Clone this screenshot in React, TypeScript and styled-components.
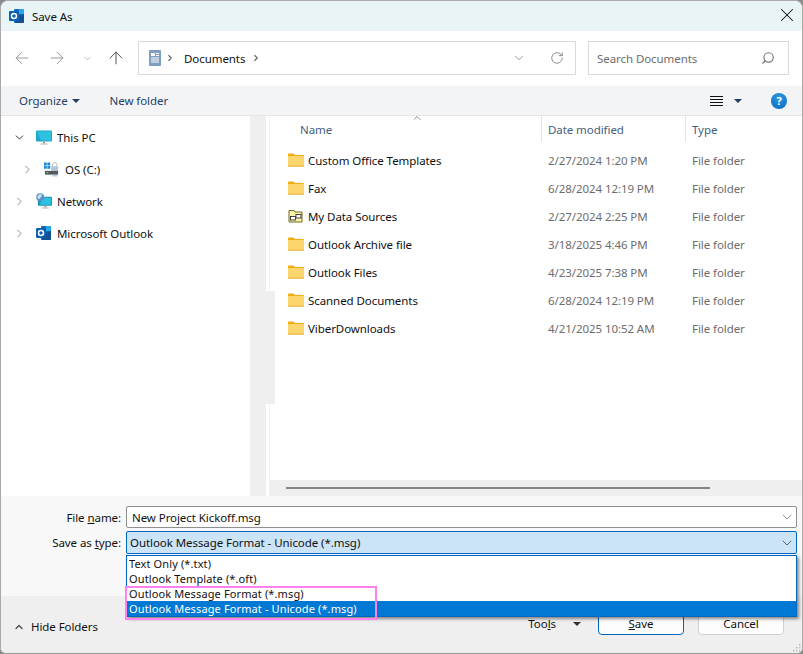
import React from "react";
import styled, { createGlobalStyle } from "styled-components";
import { ArrowLeft, ArrowRight, ArrowUp, ChevronDown, ChevronRight, ChevronUp, RotateCw, Search, X } from "lucide-react";

const GlobalStyle = createGlobalStyle`
  html, body {
    margin: 0;
    padding: 0;
    background: #8a8a8a;
  }
  body {
    font-family: "Noto Sans", "Open Sans", sans-serif;
    font-size: 11.5px;
    letter-spacing: -0.07px;
    color: #111;
  }
`;

const Window = styled.div`
  position: relative;
  width: 803px;
  height: 654px;
  box-sizing: border-box;
  border: 1px solid #a9a9a9;
  border-bottom-color: #9a9a9a;
  border-radius: 8px 8px 6px 6px;
  overflow: hidden;
  display: flex;
  flex-direction: column;
  background: #fff;
`;

const TitleBar = styled.div`
  height: 30px;
  flex: none;
  display: flex;
  align-items: center;
  padding: 0 4px 0 8px;
  gap: 7px;
  background: #e8f4f6;
`;

const TitleText = styled.span`
  flex: 1;
`;

const CloseIcon = styled(X)`
  margin-bottom: 2px;
  color: #111;
`;

const NavBar = styled.div`
  height: 55px;
  flex: none;
  display: flex;
  align-items: center;
  box-sizing: border-box;
  padding: 0 13px 1px 11px;
  background: #fff;
`;

const NavButton = styled.span<{ $width: number; $color: string }>`
  width: ${(p) => p.$width}px;
  flex: none;
  display: flex;
  align-items: center;
  color: ${(p) => p.$color};
`;

const AddressBox = styled.div`
  width: 438px;
  height: 34px;
  margin-left: 12px;
  margin-right: 12px;
  flex: none;
  box-sizing: border-box;
  border: 1px solid #d9d9d9;
  display: flex;
  align-items: center;
  padding: 0 11px 0 10px;
`;

const CrumbGap = styled.span`
  flex: 1;
`;

const CrumbArrow = styled(ChevronRight)<{ $left: number; $right: number }>`
  margin: 0 ${(p) => p.$right}px 0 ${(p) => p.$left}px;
  color: #666;
`;

const AddressDrop = styled(ChevronDown)`
  margin-right: 24px;
  color: #777;
`;

const SearchBox = styled.div`
  flex: 1;
  height: 34px;
  box-sizing: border-box;
  border: 1px solid #d9d9d9;
  display: flex;
  align-items: center;
  justify-content: space-between;
  padding: 0 13px 0 8px;
  color: #6d6d6d;
`;

const SearchGlass = styled(Search)`
  transform: scaleX(-1);
  color: #777;
`;

const ToolBar = styled.div`
  height: 30px;
  flex: none;
  display: flex;
  align-items: center;
  padding: 0 15px 0 18px;
  background: #f3f4f6;
  border-bottom: 1px solid #e6e6e6;
  box-sizing: border-box;
  color: #1f3f66;
`;

const Caret = styled.span<{ $color?: string }>`
  display: inline-block;
  width: 0;
  height: 0;
  border-left: 4px solid transparent;
  border-right: 4px solid transparent;
  border-top: 4px solid ${(p) => p.$color ?? "#1f3f66"};
`;

const OrganizeCaret = styled(Caret)`
  margin: 0 0 0 4px;
`;

const NewFolder = styled.span`
  margin-left: 30px;
  flex: 1;
`;

const ViewIcon = styled.span`
  width: 13px;
  height: 10px;
  margin-right: 11px;
  background: repeating-linear-gradient(to bottom, #111 0 1px, transparent 1px 3px);
`;

const HelpDot = styled.span`
  width: 16px;
  height: 16px;
  margin-left: 29px;
  border-radius: 50%;
  background: radial-gradient(circle at 50% 30%, #2b9be6, #0a66b8);
  color: #fff;
  font-size: 11px;
  font-weight: 700;
  line-height: 16px;
  text-align: center;
`;

const Main = styled.div`
  position: relative;
  height: 380px;
  flex: none;
  display: grid;
  grid-template-columns: 249px 16px 1fr;
`;

const TreePane = styled.div`
  padding-top: 5px;
  display: flex;
  flex-direction: column;
  background: #fff;
`;

const TreeRow = styled.div<{ $indent: number }>`
  height: 32px;
  flex: none;
  display: flex;
  align-items: center;
  padding-left: ${(p) => p.$indent}px;
`;

const TreeToggle = styled.span`
  width: 16px;
  flex: none;
  margin-right: 9px;
  display: flex;
  justify-content: center;
  color: #8a8a8a;
`;

const TreeLabel = styled.span`
  margin-left: 5px;
`;

const PaneTrack = styled.div`
  background: #efefef;
`;

const PaneThumb = styled.div`
  position: absolute;
  left: 265px;
  top: 175px;
  width: 9px;
  height: 113px;
  background: #efefef;
`;

const ListPane = styled.div`
  display: flex;
  flex-direction: column;
  min-width: 0;
  margin-left: 3px;
  border-left: 1px solid #f1f1f1;
`;

const ListHeader = styled.div`
  position: relative;
  height: 26px;
  flex: none;
  display: grid;
  grid-template-columns: 272px 144px 1fr;
  color: #46607e;
`;

const HeaderCell = styled.div<{ $pad: number; $last?: boolean }>`
  display: flex;
  align-items: center;
  padding-left: ${(p) => p.$pad}px;
  border-right: ${(p) => (p.$last ? "none" : "1px solid #e3e3e3")};
`;

const SortMark = styled.span`
  position: absolute;
  left: 141px;
  top: -4px;
  color: #666;
  display: flex;
`;

const Rows = styled.div`
  flex: 1;
  padding-top: 4px;
`;

const Row = styled.div`
  height: 28px;
  display: grid;
  grid-template-columns: 272px 144px 1fr;
  align-items: center;
`;

const NameCell = styled.div`
  display: flex;
  align-items: center;
  padding-left: 18px;
  gap: 4px;
`;

const MetaCell = styled.div`
  padding-left: 6px;
  color: #6d6d6d;
`;

const HScroll = styled.div`
  height: 16px;
  flex: none;
  display: flex;
  align-items: center;
  padding: 0 92px 0 16px;
  background: #efefef;
`;

const HThumb = styled.div`
  flex: 1;
  height: 2px;
  background: #858585;
`;

const FormArea = styled.div`
  height: 100px;
  flex: none;
  box-sizing: border-box;
  padding: 10px 5px 0 0;
  background: #f8f8f8;
  display: flex;
  flex-direction: column;
  gap: 3px;
`;

const FormRow = styled.div`
  display: flex;
  align-items: center;
`;

const FieldLabel = styled.label`
  width: 125px;
  flex: none;
  text-align: right;
  padding-right: 5px;
  box-sizing: border-box;
`;

const Field = styled.div<{ $active?: boolean }>`
  flex: 1;
  height: ${(p) => (p.$active ? 23 : 22)}px;
  box-sizing: border-box;
  display: flex;
  align-items: center;
  justify-content: space-between;
  padding: 0 1px 0 ${(p) => (p.$active ? 3 : 5)}px;
  border: 1px solid ${(p) => (p.$active ? "#0067c0" : "#8f8f8f")};
  border-radius: 2px;
  background: ${(p) => (p.$active ? "#cce4f7" : "#fff")};
  color: ${(p) => (p.$active ? "#555" : "#777")};
`;

const FieldText = styled.span`
  color: #111;
`;

const DropList = styled.div`
  position: absolute;
  left: 125px;
  top: 554px;
  width: 671px;
  height: 62px;
  box-sizing: border-box;
  border: 1px solid #0067c0;
  background: #fff;
  box-shadow: 2px 2px 3px rgba(0, 0, 0, 0.45);
  z-index: 2;
`;

const DropItem = styled.div<{ $selected?: boolean }>`
  height: 15px;
  line-height: 15px;
  padding-left: 2px;
  font-size: 11px;
  letter-spacing: 0.12px;
  color: ${(p) => (p.$selected ? "#fff" : "#111")};
  background: ${(p) => (p.$selected ? "#0078d4" : "transparent")};
`;

const Highlight = styled.div`
  position: absolute;
  left: 124px;
  top: 585px;
  width: 252px;
  height: 34px;
  box-sizing: border-box;
  border: 2px solid #ff80ee;
  z-index: 3;
`;

const Footer = styled.div`
  flex: 1;
  display: flex;
  align-items: flex-end;
  box-sizing: border-box;
  padding: 0 18px 18px 12px;
  background: #efefef;
`;

const HideFolders = styled.div`
  flex: 1;
  display: flex;
  align-items: center;
  gap: 6px;
  padding-bottom: 1px;
`;

const ToolsMenu = styled.div`
  display: flex;
  align-items: center;
  gap: 17px;
  margin-right: 17px;
  padding-bottom: 4px;
`;

const DialogButton = styled.button<{ $primary?: boolean }>`
  width: 86px;
  height: 23px;
  margin-left: ${(p) => (p.$primary ? 0 : 14)}px;
  border: 1px solid ${(p) => (p.$primary ? "#0067c0" : "#d0d0d0")};
  border-radius: 4px;
  background: #fdfdfd;
  color: #111;
  font-family: inherit;
  font-size: inherit;
  letter-spacing: inherit;
  padding: 0;
`;

const Grip = styled.svg`
  position: absolute;
  right: 1px;
  bottom: 1px;
`;

const OutlookIcon = ({ size = 16 }: { size?: number }) => (
  <svg width={size} height={size} viewBox="0 0 16 16">
    <rect x="5" y="1" width="10" height="14" rx="1" fill="#0f6cbd" />
    <rect x="10" y="1" width="5" height="5" fill="#28a8ea" />
    <path d="M7 9l8-3v8a1 1 0 0 1-1 1H6z" fill="#14447d" opacity="0.7" />
    <rect x="0" y="3" width="10" height="10" rx="1" fill="#0a5fb0" />
    <circle cx="5" cy="8" r="2.5" fill="none" stroke="#fff" strokeWidth="1.5" />
  </svg>
);

const FolderIcon = () => (
  <svg width="16" height="14" viewBox="0 0 16 14">
    <path d="M0 1.5a1 1 0 0 1 1-1h4.5l1.5 1.5h8a1 1 0 0 1 1 1V5H0z" fill="#f0ac12" />
    <rect x="0" y="3" width="16" height="10.5" rx="1" fill="#fcd56c" />
    <rect x="0" y="12.6" width="16" height="1" fill="#e8b23a" />
  </svg>
);

const SharedFolderIcon = () => (
  <svg width="16" height="14" viewBox="0 0 16 14">
    <path d="M1 13V1.5h5l1 1.5h7v10z" fill="#fdf3a8" stroke="#6e6a20" strokeWidth="1" />
    <rect x="2.5" y="7.5" width="5" height="3.5" fill="#fff" stroke="#333" strokeWidth="0.9" />
    <rect x="8" y="5.5" width="5" height="3.5" fill="#fff" stroke="#333" strokeWidth="0.9" />
  </svg>
);

const DocIcon = () => (
  <svg width="12" height="16" viewBox="0 0 12 16">
    <rect width="12" height="16" rx="1" fill="#7e9fc0" />
    <rect x="2" y="3" width="4" height="3" fill="#fff" />
    <path d="M7 3.5h3M7 5.5h3M2 8h8M2 10h8M2 12h8" stroke="#fff" strokeWidth="1" />
  </svg>
);

const MonitorIcon = () => (
  <svg width="16" height="15" viewBox="0 0 16 15">
    <rect x="0" y="0.5" width="16" height="11" rx="1" fill="#1fa5cf" />
    <path d="M1 1.5h14v9H5z" fill="#2fc2de" />
    <rect x="7" y="11.5" width="2" height="2" fill="#9a9a9a" />
    <rect x="4.5" y="13.5" width="7" height="1" fill="#b5b5b5" />
  </svg>
);

const DriveIcon = () => (
  <svg width="16" height="15" viewBox="0 0 17 15">
    <path d="M0 0h3v3H0zM3.6 0h3v3h-3zM0 3.6h3v3H0zM3.6 3.6h3v3h-3z" fill="#1a8ae0" />
    <rect x="7.5" y="4" width="7.5" height="5" fill="#b4c6d6" />
    <path d="M9 4V2.5a2.4 2.4 0 0 1 4.8 0V4" fill="none" stroke="#b8b8b8" strokeWidth="1" />
    <rect x="1" y="9" width="14" height="4" fill="#54585c" />
    <rect x="2.5" y="10.5" width="2" height="1" fill="#6fe06f" />
    <path d="M9 13h5v2H9z" fill="#b4c6d6" />
  </svg>
);

const NetworkIcon = () => (
  <svg width="16" height="16" viewBox="0 0 17 17">
    <rect x="2" y="4" width="15" height="9.5" rx="1" fill="#1795b8" />
    <path d="M7 5h9v7.5H4z" fill="#2fc2de" />
    <rect x="9" y="13.5" width="2" height="2" fill="#9a9a9a" />
    <rect x="6.5" y="15.5" width="7" height="1" fill="#b5b5b5" />
    <circle cx="4.5" cy="4.5" r="4.2" fill="#5b93c9" />
    <path d="M2 3c1.5-2 3-2 4-1.5S5 5 3.5 6 1 5 2 3z" fill="#cfe3f2" />
  </svg>
);

const files: [string, string, boolean?][] = [
  ["Custom Office Templates", "2/27/2024 1:20 PM"],
  ["Fax", "6/28/2024 12:19 PM"],
  ["My Data Sources", "2/27/2024 2:25 PM", true],
  ["Outlook Archive file", "3/18/2025 4:46 PM"],
  ["Outlook Files", "4/23/2025 7:38 PM"],
  ["Scanned Documents", "6/28/2024 12:19 PM"],
  ["ViberDownloads", "4/21/2025 10:52 AM"],
];

const App: React.FC = () => {
  return (
    <>
      <GlobalStyle />
      <Window>
        <TitleBar>
          <OutlookIcon />
          <TitleText>Save As</TitleText>
          <CloseIcon size={22} strokeWidth={1.1} />
        </TitleBar>

        <NavBar>
          <NavButton $width={35} $color="#9a9a9a"><ArrowLeft size={20} strokeWidth={1.2} /></NavButton>
          <NavButton $width={35} $color="#9a9a9a"><ArrowRight size={20} strokeWidth={1.2} /></NavButton>
          <NavButton $width={24} $color="#9a9a9a"><ChevronDown size={11} strokeWidth={1.4} /></NavButton>
          <NavButton $width={20} $color="#555"><ArrowUp size={20} strokeWidth={1.2} /></NavButton>
          <AddressBox>
            <DocIcon />
            <CrumbArrow size={10} strokeWidth={2.6} $left={4} $right={9} />
            <span>Documents</span>
            <CrumbArrow size={10} strokeWidth={2.6} $left={6} $right={0} />
            <CrumbGap />
            <AddressDrop size={14} strokeWidth={1.2} />
            <RotateCw size={14} strokeWidth={1.4} color="#777" />
          </AddressBox>
          <SearchBox>
            <span>Search Documents</span>
            <SearchGlass size={14} strokeWidth={2} />
          </SearchBox>
        </NavBar>

        <ToolBar>
          <span>Organize</span>
          <OrganizeCaret />
          <NewFolder>New folder</NewFolder>
          <ViewIcon />
          <Caret />
          <HelpDot>?</HelpDot>
        </ToolBar>

        <Main>
          <TreePane>
            <TreeRow $indent={10}>
              <TreeToggle><ChevronDown size={13} strokeWidth={1.8} color="#333" /></TreeToggle>
              <MonitorIcon />
              <TreeLabel>This PC</TreeLabel>
            </TreeRow>
            <TreeRow $indent={18}>
              <TreeToggle><ChevronRight size={13} strokeWidth={1.8} /></TreeToggle>
              <DriveIcon />
              <TreeLabel>OS (C:)</TreeLabel>
            </TreeRow>
            <TreeRow $indent={10}>
              <TreeToggle><ChevronRight size={13} strokeWidth={1.8} /></TreeToggle>
              <NetworkIcon />
              <TreeLabel>Network</TreeLabel>
            </TreeRow>
            <TreeRow $indent={10}>
              <TreeToggle><ChevronRight size={13} strokeWidth={1.8} /></TreeToggle>
              <OutlookIcon />
              <TreeLabel>Microsoft Outlook</TreeLabel>
            </TreeRow>
          </TreePane>
          <PaneTrack />
          <ListPane>
            <ListHeader>
              <HeaderCell $pad={30}>Name</HeaderCell>
              <HeaderCell $pad={6}>Date modified</HeaderCell>
              <HeaderCell $pad={6} $last>Type</HeaderCell>
              <SortMark><ChevronUp size={12} strokeWidth={1.4} /></SortMark>
            </ListHeader>
            <Rows>
              {files.map(([name, date, shared]) => (
                <Row key={name}>
                  <NameCell>
                    {shared ? <SharedFolderIcon /> : <FolderIcon />}
                    <span>{name}</span>
                  </NameCell>
                  <MetaCell>{date}</MetaCell>
                  <MetaCell>File folder</MetaCell>
                </Row>
              ))}
            </Rows>
            <HScroll><HThumb /></HScroll>
          </ListPane>
          <PaneThumb />
        </Main>

        <FormArea>
          <FormRow>
            <FieldLabel>File <u>n</u>ame:</FieldLabel>
            <Field>
              <FieldText>New Project Kickoff.msg</FieldText>
              <ChevronDown size={16} strokeWidth={1.2} />
            </Field>
          </FormRow>
          <FormRow>
            <FieldLabel>Save as <u>t</u>ype:</FieldLabel>
            <Field $active>
              <FieldText>Outlook Message Format - Unicode (*.msg)</FieldText>
              <ChevronDown size={16} strokeWidth={1.4} />
            </Field>
          </FormRow>
        </FormArea>

        <DropList>
          <DropItem>Text Only (*.txt)</DropItem>
          <DropItem>Outlook Template (*.oft)</DropItem>
          <DropItem>Outlook Message Format (*.msg)</DropItem>
          <DropItem $selected>Outlook Message Format - Unicode (*.msg)</DropItem>
        </DropList>
        <Highlight />

        <Footer>
          <HideFolders>
            <ChevronUp size={12} strokeWidth={2.4} color="#444" />
            <span>Hide Folders</span>
          </HideFolders>
          <ToolsMenu>
            <span>Too<u>l</u>s</span>
            <Caret $color="#333" />
          </ToolsMenu>
          <DialogButton $primary><u>S</u>ave</DialogButton>
          <DialogButton>Cancel</DialogButton>
        </Footer>

        <Grip width="9" height="9" viewBox="0 0 9 9">
          <path d="M7 1h1.4v1.4H7zM4 4h1.4v1.4H4zM7 4h1.4v1.4H7zM1 7h1.4v1.4H1zM4 7h1.4v1.4H4zM7 7h1.4v1.4H7z" fill="#b5b5b5" />
        </Grip>
      </Window>
    </>
  );
};

export default App;
